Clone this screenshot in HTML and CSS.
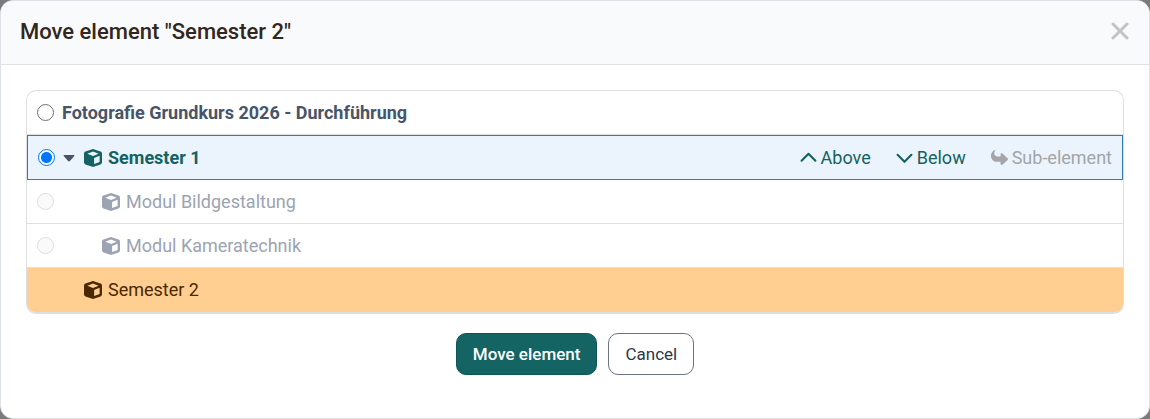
FILE: index.html
```html
<!DOCTYPE html>
<html lang="en">
<head>
  <meta charset="UTF-8" />
  <meta name="viewport" content="width=device-width, initial-scale=1.0" />
  <title>Move element</title>
  <link rel="stylesheet" href="styles.css">
</head>
<body>
  <svg class="sprite" aria-hidden="true">
    <symbol id="cube" viewBox="0 0 512 512">
      <path d="M234.5 5.7c13.9-5 29.1-5 43.1 0l192 68.6C495 83.4 512 107.5 512 134.6V377.4c0 27-17 51.2-42.5 60.3l-192 68.6c-13.9 5-29.1 5-43.1 0l-192-68.6C17 428.6 0 404.5 0 377.4V134.6c0-27 17-51.2 42.5-60.3l192-68.6zM256 68L96 132 256 196l160-64L256 68zm32 362l156-62v-176L288 254v176z"/>
    </symbol>
  </svg>

  <div class="modal" role="dialog" aria-labelledby="title">
    <header class="modal-header">
      <h1 id="title">Move element "Semester 2"</h1>
      <button class="close" type="button" aria-label="Close">
        <svg viewBox="0 0 18 18"><path d="M2 2l14 14M16 2L2 16"/></svg>
      </button>
    </header>

    <form class="modal-body">
      <ul class="tree">
        <li class="row root">
          <input type="radio" name="target" id="course">
          <label for="course">Fotografie Grundkurs 2026 - Durchführung</label>
        </li>
        <li class="row selected">
          <input type="radio" name="target" id="sem1" checked>
          <button class="toggle" type="button" aria-label="Collapse">
            <svg viewBox="0 0 12 8"><path d="M1.4 1h9.200q1.600 0 .5 1.200L6.900 7q-.9.900-1.800 0L.9 2.200Q-.200 1 1.400 1z"/></svg>
          </button>
          <label for="sem1"><svg class="cube"><use href="#cube"/></svg>Semester 1</label>
          <div class="actions">
            <button type="button">
              <svg class="chevron" viewBox="0 0 16 16"><path d="M1.500 11L8 4.500l6.500 6.500"/></svg>Above
            </button>
            <button type="button">
              <svg class="chevron" viewBox="0 0 16 16"><path d="M1.500 5.500L8 12l6.500-6.500"/></svg>Below
            </button>
            <button type="button" disabled>
              <svg class="share" viewBox="0 0 512 512"><path transform="matrix(1 0 0 -1 0 512)" d="M307 34.8c-11.5 5.1-19 16.6-19 29.2v64H176C78.800 128 0 206.800 0 304C0 417.300 81.500 467.900 100.200 478.100c2.500 1.400 5.300 1.900 8.100 1.900c10.900 0 19.700-8.900 19.700-19.700c0-7.500-4.300-14.400-9.800-19.500C108.800 431.900 96 414.400 96 384c0-53 43-96 96-96h96v64c0 12.600 7.400 24.100 19 29.200s25 3 34.400-5.400l160-144c6.700-6.100 10.600-14.700 10.600-23.800s-3.800-17.700-10.600-23.800l-160-144c-9.400-8.500-22.900-10.600-34.400-5.400z"/></svg>Sub-element
            </button>
          </div>
        </li>
        <li class="row child">
          <input type="radio" name="target" id="mod1" disabled>
          <label for="mod1"><svg class="cube"><use href="#cube"/></svg>Modul Bildgestaltung</label>
        </li>
        <li class="row child">
          <input type="radio" name="target" id="mod2" disabled>
          <label for="mod2"><svg class="cube"><use href="#cube"/></svg>Modul Kameratechnik</label>
        </li>
        <li class="row source">
          <span class="name"><svg class="cube"><use href="#cube"/></svg>Semester 2</span>
        </li>
      </ul>

      <div class="buttons">
        <button class="btn primary" type="submit">Move element</button>
        <button class="btn" type="button">Cancel</button>
      </div>
    </form>
  </div>
</body>
</html>
```

FILE: styles.css
```css
* {
  box-sizing: border-box;
}
body {
  margin: 0;
  min-height: 100vh;
  display: flex;
  background: #7b7b7b;
  font-family: Roboto, sans-serif;
  font-size: 18px;
  line-height: 26px;
  color: #2d3748;
}
button {
  font: inherit;
  color: inherit;
  background: none;
  border: none;
  padding: 0;
  cursor: pointer;
}
svg {
  fill: currentColor;
  flex: none;
}
.sprite {
  position: absolute;
  width: 0;
  height: 0;
}
.modal {
  flex: 1;
  background: #fff;
  border: 1px solid #dfe1e8;
  border-radius: 13px;
  overflow: hidden;
}
.modal-header {
  display: flex;
  align-items: center;
  justify-content: space-between;
  padding: 16px 20px 17px 19px;
  background: #f9fafc;
  border-bottom: 1px solid #e0e2e6;
}
h1 {
  margin: 0;
  font-size: 22px;
  line-height: 30px;
  font-weight: 500;
  color: #32261d;
}
.close {
  display: flex;
  padding-bottom: 2px;
}
.close svg {
  width: 18px;
  height: 18px;
  fill: none;
  stroke: #c4c4c6;
  stroke-width: 3;
  stroke-linecap: round;
}
.modal-body {
  padding: 25px;
}

/* element tree */
.tree {
  margin: 0;
  padding: 0;
  list-style: none;
  border: 1px solid #dedfe1;
  border-bottom-width: 2px;
  border-radius: 10px;
  overflow: hidden;
}
.row {
  display: flex;
  align-items: center;
  height: 44px;
  padding: 0 10px;
  border-bottom: 1px solid #dedfe1;
}
.row label,
.name {
  display: flex;
  align-items: center;
  gap: 6px;
}
.root label {
  margin-left: 8px;
  font-weight: 700;
  color: #475569;
}
.cube {
  width: 18px;
  height: 18px;
}
input[type="radio"] {
  appearance: none;
  flex: none;
  width: 17px;
  height: 17px;
  margin: 0;
  border: 1px solid #707070;
  border-radius: 50%;
  background: #fff;
}
input[type="radio"]:checked {
  border-color: #0075ff;
  background: radial-gradient(circle, #0075ff 5px, #fff 6px);
}
input[type="radio"]:disabled {
  border-color: #dedede;
  background: #fafafa;
}
.selected {
  height: 45px;
  border: 1px solid #2a7cc4;
  background: #ebf4fc;
  color: #146262;
}
.selected label {
  font-weight: 700;
}
.toggle {
  display: flex;
  margin: 0 9px 0 8px;
  color: #475569;
}
.toggle svg {
  width: 12px;
  height: 8px;
}
.actions {
  display: flex;
  gap: 25px;
  margin-left: auto;
}
.actions button {
  display: flex;
  align-items: center;
  gap: 4px;
}
.actions button:disabled {
  color: #a3a5a7;
  cursor: default;
}
.actions svg {
  width: 17px;
  height: 17px;
}
.chevron {
  fill: none;
  stroke: currentColor;
  stroke-width: 2;
  stroke-linecap: round;
  stroke-linejoin: round;
}
.child {
  color: #9ca3b2;
}
.child label {
  margin-left: 48px;
}
.source {
  padding-left: 57px;
  border-bottom: none;
  background: #ffce90;
  color: #4a2800;
}

.buttons {
  display: flex;
  justify-content: center;
  gap: 11px;
  margin-top: 19px;
}
.btn {
  padding: 7px 16px;
  font-size: 17px;
  line-height: 26px;
  border: 1px solid #6b7280;
  border-radius: 10px;
}
.primary {
  border-color: #0f5555;
  background: #146464;
  color: #fff;
  font-weight: 500;
}
```
